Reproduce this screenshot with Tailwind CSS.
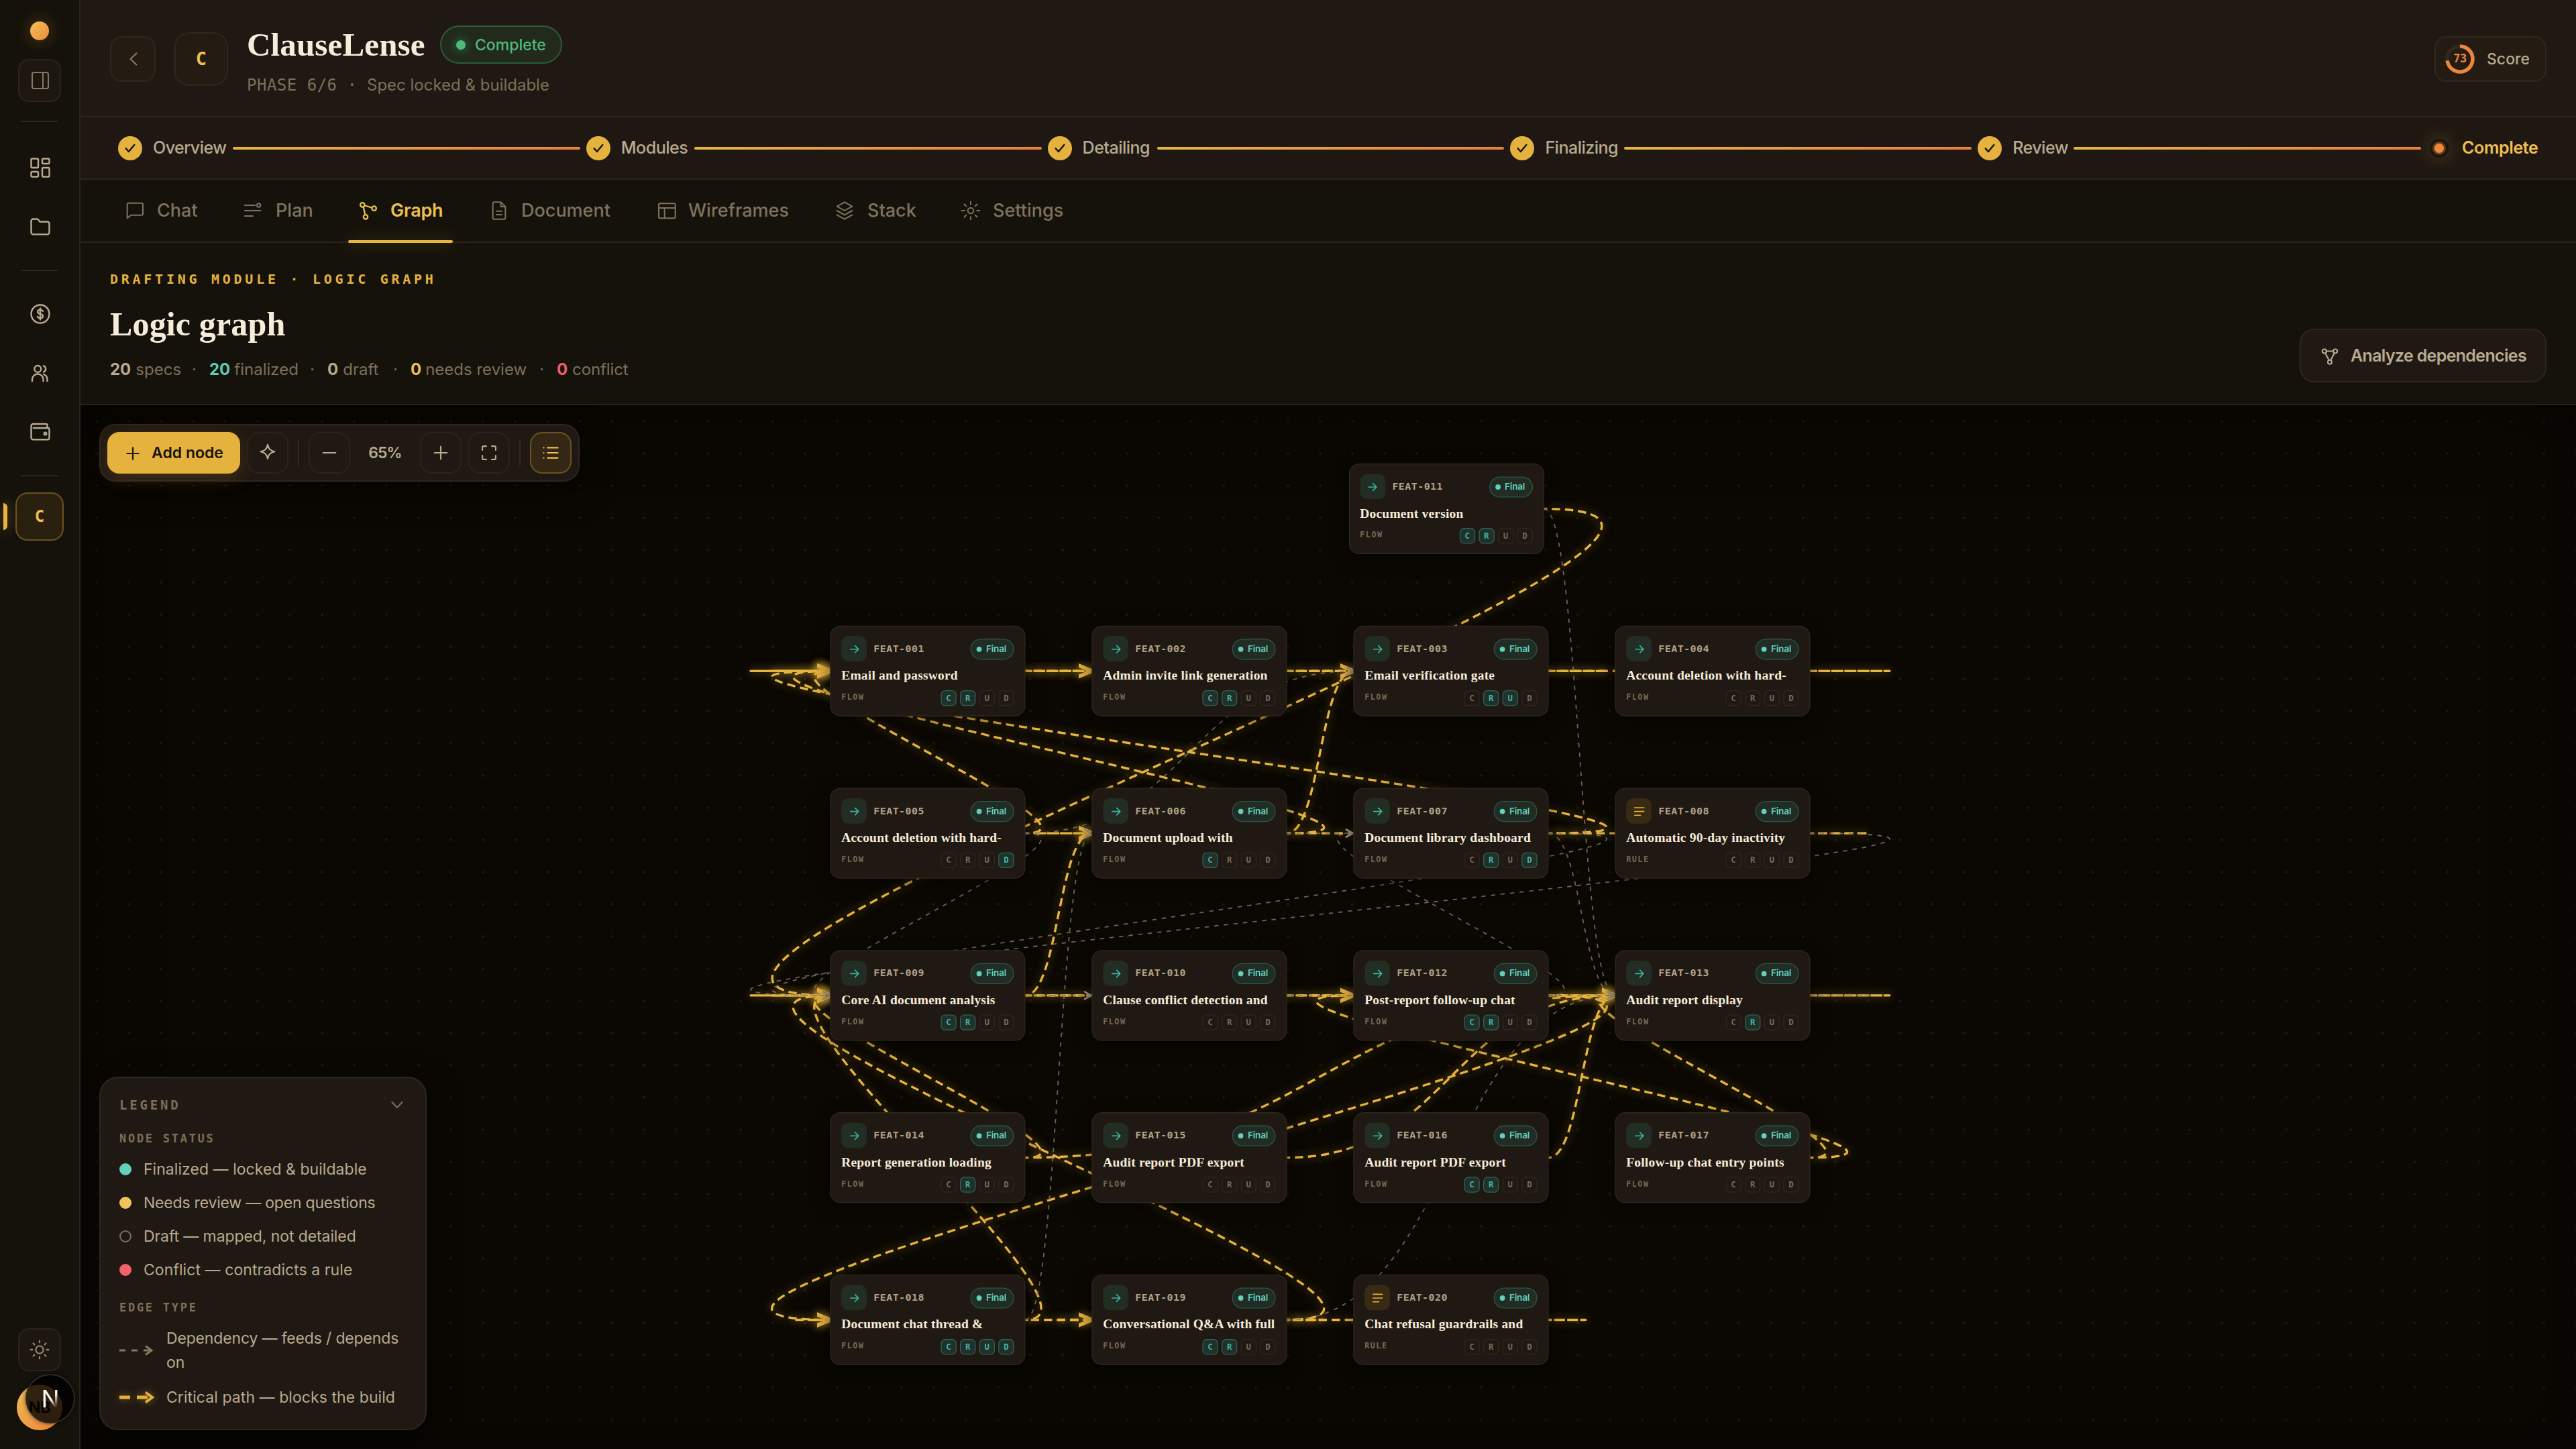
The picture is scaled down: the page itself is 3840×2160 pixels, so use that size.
<!DOCTYPE html>
<html lang="en">
<head>
  <meta charset="UTF-8" />
  <meta name="viewport" content="width=device-width, initial-scale=1" />
  <title>ClauseLense - Logic graph</title>
  <script src="https://cdn.jsdelivr.net/npm/@tailwindcss/browser@4"></script>
</head>
<body class="flex h-[2160px] w-[3840px] overflow-hidden bg-[#15120b] font-['Inter','Liberation_Sans',sans-serif] text-[#b8ab90]">

  <!-- Sidebar -->
  <aside class="relative flex h-full w-[120px] shrink-0 flex-col items-center border-r-2 border-[#28241c] bg-[#15120b] pt-8 pb-7">
    <div class="size-7 rounded-full bg-linear-to-br from-[#f2c155] to-[#ea8a3c] shadow-[0_0_24px_rgba(232,150,50,0.35)]"></div>
    <button class="mt-7 flex size-16 items-center justify-center rounded-2xl border-2 border-[#2b241b] bg-[#1e1711] text-[#857960]">
      <svg class="ml-0.5 size-8" viewBox="0 0 24 24" fill="none" stroke="currentColor" stroke-width="1.5"><rect x="3" y="3" width="18" height="18" rx="2"/><path d="M15 3v18"/></svg>
    </button>
    <div class="mt-7 h-0.5 w-14 bg-[#2d261b]"></div>
    <a class="mt-8 ml-0.5 flex size-[72px] items-center justify-center">
      <svg class="size-9" viewBox="0 0 24 24" fill="none" stroke="currentColor" stroke-width="1.6"><rect x="3" y="3" width="7" height="9" rx="1"/><rect x="14" y="3" width="7" height="5" rx="1"/><rect x="14" y="12" width="7" height="9" rx="1"/><rect x="3" y="16" width="7" height="5" rx="1"/></svg>
    </a>
    <a class="mt-4 ml-0.5 flex size-[72px] items-center justify-center">
      <svg class="size-9" viewBox="0 0 24 24" fill="none" stroke="currentColor" stroke-width="1.6" stroke-linejoin="round"><path d="M3 6.3a2 2 0 0 1 2-2h3.6a2 2 0 0 1 1.6.8l1.4 1.9H19a2 2 0 0 1 2 2v8.6a2 2 0 0 1-2 2H5a2 2 0 0 1-2-2z"/></svg>
    </a>
    <div class="mt-7 h-0.5 w-14 bg-[#2d261b]"></div>
    <a class="mt-7 ml-0.5 flex size-[72px] items-center justify-center">
      <svg class="size-9" viewBox="0 0 24 24" fill="none" stroke="currentColor" stroke-width="1.6" stroke-linecap="round"><circle cx="12" cy="12" r="9"/><path d="M14.6 9.3c-.4-.9-1.3-1.4-2.6-1.4-1.5 0-2.6.7-2.6 1.9 0 2.9 5.3 1.4 5.3 4.3 0 1.3-1.2 2-2.7 2-1.4 0-2.4-.6-2.7-1.5M12 6.3v11.4"/></svg>
    </a>
    <a class="mt-4 ml-0.5 flex size-[72px] items-center justify-center">
      <svg class="size-9" viewBox="0 0 24 24" fill="none" stroke="currentColor" stroke-width="1.6" stroke-linecap="round"><circle cx="9.5" cy="8" r="3.3"/><path d="M4 20v-1.5a5.5 5.5 0 0 1 11 0V20M15.3 4.9a3.3 3.3 0 0 1 0 6.2M15.5 13.4a5.5 5.5 0 0 1 3.5 5.1V20"/></svg>
    </a>
    <a class="mt-4 ml-0.5 flex size-[72px] items-center justify-center">
      <svg class="size-9" viewBox="0 0 24 24" fill="none" stroke="currentColor" stroke-width="1.6" stroke-linejoin="round"><path d="M19 8V5.5A1.5 1.5 0 0 0 17.5 4H5a2 2 0 0 0-2 2v11.5a2 2 0 0 0 2 2h14.5A1.5 1.5 0 0 0 21 18V9.5A1.5 1.5 0 0 0 19.5 8h-15"/><circle cx="17" cy="13.7" r="1.2"/></svg>
    </a>
    <div class="mt-7 h-0.5 w-14 bg-[#2d261b]"></div>
    <a class="relative mt-6 flex size-[72px] items-center justify-center rounded-[18px] border-2 border-[#6a511e] bg-[#292010] font-['DejaVu_Sans_Mono',monospace] text-[24px] font-bold text-[#f0c04f]">
      C
      <span class="absolute top-[14px] -left-5 h-10 w-1.5 rounded-r-full bg-[#e9b440] shadow-[0_0_20px_rgba(232,178,60,0.5)]"></span>
    </a>
    <button class="mt-auto flex size-16 shrink-0 items-center justify-center rounded-2xl border-2 border-[#2b241b] bg-[#1e1711] text-[#92866c]">
      <svg class="size-8" viewBox="0 0 24 24" fill="none" stroke="currentColor" stroke-width="1.7" stroke-linecap="round"><circle cx="12" cy="12" r="4.2"/><path d="M12 2v2M12 20v2M4.900 4.900l1.400 1.400M17.700 17.700l1.400 1.400M2 12h2M20 12h2M4.900 19.100l1.400-1.400M17.700 6.300l1.400-1.400"/></svg>
    </button>
    <div class="relative mt-5 flex size-[68px] shrink-0 items-center justify-center rounded-full bg-linear-to-br from-[#f2bd52] to-[#e8833a] text-[23px] font-bold text-[#15100a]">
      NB
      <div class="absolute -top-4 left-[13px] flex size-[74px] items-center justify-center rounded-full border-2 border-[#2c2a28] bg-black/80 shadow-[0_0_6px_rgba(0,0,0,0.6)]">
        <span class="bg-linear-to-br from-white from-55% to-white/10 to-80% bg-clip-text text-[36px] leading-none font-normal text-transparent">N</span>
      </div>
    </div>
  </aside>

  <main class="flex h-full min-w-0 flex-1 flex-col">

    <!-- Project header -->
    <header class="flex h-[175px] shrink-0 items-start border-b-2 border-[#2b251f] bg-[#201812] pr-11 pl-11">
      <button class="mt-[54px] flex size-[68px] items-center justify-center rounded-[18px] border-2 border-[#30271c] bg-[#241b13] text-[#857960]">
        <svg class="ml-0.5 size-8" viewBox="0 0 24 24" fill="none" stroke="currentColor" stroke-width="1.7" stroke-linecap="round" stroke-linejoin="round"><path d="M15.300 5.600L8.600 12l6.700 6.400"/></svg>
      </button>
      <div class="mt-12 ml-7 flex size-20 items-center justify-center rounded-[22px] border-2 border-[#30271c] bg-[#241b13] font-['DejaVu_Sans_Mono',monospace] text-[27px] font-bold text-[#f0c04f]">C</div>
      <div class="mt-[38px] ml-[28px]">
        <div class="flex h-[57px] items-center">
          <h1 class="w-[288px] font-['Liberation_Serif',serif] text-[49px] leading-none font-bold tracking-[0.003em] whitespace-nowrap text-[#f6ecda]">ClauseLense</h1>
          <span class="flex h-[57px] w-[182px] items-center rounded-full border-2 border-[#2b5a3c] bg-[#222a1c] pt-px pl-[22px] text-[23px] font-medium text-[#50b97c]">
            <i class="mr-[14px] size-[14px] rounded-full bg-[#4fba7d] shadow-[0_0_14px_rgba(79,186,125,0.6)]"></i>Complete
          </span>
        </div>
        <div class="mt-[16px] flex h-8 items-center text-2xl text-[#7c7059]">
          <span class="w-[179px] font-['DejaVu_Sans_Mono',monospace] tracking-[0.5px]">PHASE 6/6<span class="ml-[15px]">·</span></span>
          <span>Spec locked &amp; buildable</span>
        </div>
      </div>
      <button class="mt-[54px] ml-auto flex h-[68px] w-[167px] items-center rounded-[18px] border-2 border-[#30271c] bg-[#241b13] pl-[14px] text-[23px] font-medium text-[#b8ab90]">
        <span class="relative mr-[18px] flex size-[44px] items-center justify-center">
          <svg class="absolute inset-0 size-[44px] -rotate-90" viewBox="0 0 44 44" fill="none" stroke-width="5.5"><circle cx="22" cy="22" r="19" stroke="#30281e"/><circle cx="22" cy="22" r="19" stroke="#ea853a" pathLength="100" stroke-dasharray="73 100"/></svg>
          <span class="font-['DejaVu_Sans_Mono',monospace] text-[17px] font-bold tracking-[-0.03em] text-[#ea853a]">73</span>
        </span>Score
      </button>
    </header>

    <!-- Phase stepper -->
    <div id="stepper" class="flex h-[93px] shrink-0 items-center border-b-2 border-[#2b251f] bg-[#1f1812] pr-[47px] pl-14 text-[25px] font-medium"></div>

    <!-- Tabs -->
    <nav class="flex h-[94px] shrink-0 items-center border-b-2 border-[#28241b] pl-[65px] text-[27px] font-medium text-[#7f735c]">
      <a class="flex w-[176px] items-center gap-[17px]">
        <svg class="size-8" viewBox="0 0 24 24" fill="none" stroke="currentColor" stroke-width="1.5" stroke-linejoin="round"><path d="M21 15.500a1.500 1.500 0 0 1-1.500 1.500H7.500L3.500 20.500V5A1.500 1.500 0 0 1 5 3.500h14.500A1.500 1.500 0 0 1 21 5z"/></svg>Chat
      </a>
      <a class="flex w-[172px] items-center gap-[18px]">
        <svg class="size-8" viewBox="0 0 24 24" fill="none" stroke="currentColor" stroke-width="1.5" stroke-linecap="round"><path d="M3 6h11.500M3 12h17.500M3 18h9"/><circle cx="18.500" cy="6" r="2"/></svg>Plan
      </a>
      <a class="relative flex h-[92px] w-[195px] items-center gap-[17px] font-semibold tracking-[-0.01em] text-[#f0c04f]">
        <svg class="size-8" viewBox="0 0 24 24" fill="none" stroke="currentColor" stroke-width="1.7"><circle cx="5.500" cy="5.500" r="2.400"/><circle cx="18.500" cy="9.500" r="2.400"/><circle cx="9" cy="19" r="2.400"/><path d="M7.900 6.200l8.200 2.600M6.500 7.700l2 8.900"/></svg>Graph
        <span class="absolute -bottom-0.5 -left-[14px] h-1 w-[156px] rounded-full bg-[#e9b440] shadow-[0_0_24px_rgba(232,160,60,0.4)]"></span>
      </a>
      <a class="flex w-[250px] items-center gap-[17px]">
        <svg class="size-8" viewBox="0 0 24 24" fill="none" stroke="currentColor" stroke-width="1.5" stroke-linejoin="round"><path d="M14 2.500H6.500A1.500 1.500 0 0 0 5 4v16a1.500 1.500 0 0 0 1.500 1.500h11A1.500 1.500 0 0 0 19 20V7.500zM14 2.500v5h5M8.500 12.500h7M8.500 16.500h7"/></svg>Document
      </a>
      <a class="flex w-[265px] items-center gap-4">
        <svg class="size-8" viewBox="0 0 24 24" fill="none" stroke="currentColor" stroke-width="1.5"><rect x="3" y="4" width="18.500" height="16.500" rx="1.500"/><path d="M3 9h18.500M9.500 9v11.500"/></svg>Wireframes
      </a>
      <a class="flex w-[188px] items-center gap-[18px]">
        <svg class="size-8" viewBox="0 0 24 24" fill="none" stroke="currentColor" stroke-width="1.5" stroke-linejoin="round" stroke-linecap="round"><path d="M12 2.500l8.500 4.700L12 12 3.500 7.200zM3.500 12l8.500 4.700 8.500-4.700M3.500 16.700l8.500 4.700 8.500-4.700"/></svg>Stack
      </a>
      <a class="flex items-center gap-[17px]">
        <svg class="size-8" viewBox="0 0 24 24" fill="none" stroke="currentColor" stroke-width="1.5" stroke-linecap="round"><circle cx="12" cy="12" r="3.200"/><path d="M12 2v3M12 19v3M4.900 4.900l2.100 2.100M17 17l2.100 2.100M2 12h3M19 12h3M4.900 19.100L7 17M17 7l2.100-2.100"/></svg>Settings
      </a>
    </nav>

    <!-- Page head -->
    <section class="flex h-[242px] shrink-0 items-end justify-between border-b-2 border-[#28241b] px-11 pb-8">
      <div class="pb-px">
        <p class="h-6 font-['DejaVu_Sans_Mono',monospace] text-[20px] leading-5 font-bold tracking-[0.237em] text-[#e5b23e]">DRAFTING MODULE · LOGIC GRAPH</p>
        <h2 class="mt-[23px] font-['Liberation_Serif',serif] text-[50px] leading-[60px] font-bold tracking-[0.003em] text-[#f6ecda]">Logic graph</h2>
        <div class="mt-5 flex h-9 items-center text-[24px] text-[#7c7059]">
          <span class="flex w-[148px] justify-between"><span><b class="mr-[7px] font-bold text-[#b8ab90]">20</b>specs</span><i class="mr-[19px] not-italic">·</i></span>
          <span class="flex w-[176px] justify-between"><span><b class="mr-[6px] font-bold text-[#5ecdb8]">20</b>finalized</span><i class="mr-[19px] not-italic">·</i></span>
          <span class="flex w-[124px] justify-between"><span><b class="mr-[7px] font-bold text-[#b8ab90]">0</b>draft</span><i class="mr-[19px] not-italic">·</i></span>
          <span class="flex w-[218px] justify-between"><span><b class="mr-[6px] font-bold text-[#f0c04f]">0</b>needs review</span><i class="mr-[19px] not-italic">·</i></span>
          <span class="tracking-[-0.005em]"><b class="mr-[7px] font-bold text-[#f05f66]">0</b>conflict</span>
        </div>
      </div>
      <button class="flex h-20 w-[368px] items-center rounded-[22px] border-2 border-[#30271c] bg-[#201812] pt-0.5 pl-7 text-[25px] font-semibold tracking-[-0.027em] whitespace-nowrap text-[#b8ab90]">
        <svg class="mr-[16px] size-[30px]" viewBox="0 0 24 24" fill="none" stroke="currentColor" stroke-width="1.7"><circle cx="5.500" cy="6" r="2.400"/><circle cx="18.500" cy="6" r="2.400"/><circle cx="12" cy="19" r="2.400"/><path d="M7.900 6h8.200M6.500 8.200l4.500 8.600M17.500 8.200L13 16.800"/></svg>Analyze dependencies
      </button>
    </section>

    <!-- Graph canvas -->
    <section class="relative flex-1 overflow-hidden bg-[#0b0803]">
      <div class="absolute inset-0 bg-[radial-gradient(circle,#1b1711_1.5px,transparent_2.2px)] bg-size-[48px_48px]"></div>
      <div class="absolute inset-0 shadow-[inset_0_0_110px_rgba(0,0,0,0.5)]"></div>

      <div id="viewport" class="absolute top-0 left-0 origin-top-left translate-x-[1117.3px] translate-y-[328.7px] scale-[1.3]">
        <svg class="absolute top-0 left-0 size-px overflow-visible" fill="none">
          <defs>
            <marker id="critical" markerUnits="userSpaceOnUse" markerWidth="20" markerHeight="20" viewBox="-15 -10 20 20" refX="0" refY="0" orient="auto"><path d="M-20 -8.500L0.500 0L-20 8.500" fill="none" stroke="#e5b13d" stroke-width="4.300"/></marker>
            <marker id="dependency" markerUnits="userSpaceOnUse" markerWidth="14" markerHeight="14" viewBox="-10 -7 14 14" refX="0" refY="0" orient="auto"><path d="M-8 -4.200L-0.500 0L-8 4.200" fill="none" stroke="#a09580" stroke-width="1.900" stroke-linecap="round" stroke-linejoin="round"/></marker>
          </defs>
          <g id="edges"></g>
        </svg>
      </div>

      <!-- Toolbar -->
      <div class="absolute top-7 left-7 flex h-[86px] w-[716px] items-center gap-2.5 rounded-3xl border-2 border-[#2d261d] bg-[#201812] px-2.5 text-[#b8ab90] shadow-[0_16px_48px_rgba(0,0,0,0.5)]">
        <button class="flex h-[62px] w-[198px] shrink-0 items-center rounded-[18px] bg-[#e5b23e] pt-px pl-6 text-[23px] font-semibold whitespace-nowrap text-[#1a140a] shadow-[0_8px_28px_rgba(232,160,60,0.18)]">
          <svg class="mr-[14px] size-7" viewBox="0 0 24 24" fill="none" stroke="currentColor" stroke-width="1.800" stroke-linecap="round"><path d="M12 4.500v15M4.500 12h15"/></svg>Add node
        </button>
        <button class="flex size-[62px] shrink-0 items-center justify-center rounded-[18px] border-2 border-[#29241b]">
          <svg class="size-7" viewBox="0 0 24 24" fill="none" stroke="currentColor" stroke-width="1.900" stroke-linejoin="round"><path d="M12 1.500c1.100 5.500 3.400 7.900 9 9-5.600 1.100-7.900 3.500-9 9-1.100-5.500-3.400-7.900-9-9 5.600-1.100 7.900-3.500 9-9z"/></svg>
        </button>
        <span class="mx-1 h-10 w-0.5 bg-[#30281d]"></span>
        <button class="flex size-[62px] shrink-0 items-center justify-center rounded-[18px] border-2 border-[#29241b]">
          <svg class="size-7" viewBox="0 0 24 24" fill="none" stroke="currentColor" stroke-width="1.800" stroke-linecap="round"><path d="M4 12h16"/></svg>
        </button>
        <span class="w-[84px] text-center text-[23px] font-semibold tracking-[-0.04em]">65%</span>
        <button class="flex size-[62px] shrink-0 items-center justify-center rounded-[18px] border-2 border-[#29241b]">
          <svg class="size-7" viewBox="0 0 24 24" fill="none" stroke="currentColor" stroke-width="1.800" stroke-linecap="round"><path d="M12 4v16M4 12h16"/></svg>
        </button>
        <button class="flex size-[62px] shrink-0 items-center justify-center rounded-[18px] border-2 border-[#29241b]">
          <svg class="size-7" viewBox="0 0 24 24" fill="none" stroke="currentColor" stroke-width="1.800" stroke-linecap="round" stroke-linejoin="round"><path d="M3.500 8.500V5A1.500 1.500 0 0 1 5 3.500h3.500M15.500 3.500H19A1.500 1.500 0 0 1 20.500 5v3.500M20.500 15.500V19a1.500 1.500 0 0 1-1.500 1.500h-3.500M8.500 20.500H5A1.500 1.500 0 0 1 3.500 19v-3.500"/></svg>
        </button>
        <span class="mx-1 h-10 w-0.5 bg-[#30281d]"></span>
        <button class="flex size-[62px] shrink-0 items-center justify-center rounded-[18px] border-2 border-[#6a511e] bg-[#342715] text-[#f0c04f]">
          <svg class="size-7" viewBox="0 0 24 24" fill="none" stroke="currentColor" stroke-width="1.900" stroke-linecap="round"><path d="M8 5.500h13M8 12h13M8 18.500h13M3 5.500h.01M3 12h.01M3 18.500h.01"/></svg>
        </button>
      </div>

      <!-- Legend -->
      <div class="absolute bottom-7 left-7 flex h-[527px] w-[488px] flex-col rounded-[28px] border-2 border-[#2f271d] bg-[#201812] px-7 pt-[25px] text-[23px] leading-9 text-[#b8ab90] shadow-[0_16px_48px_rgba(0,0,0,0.5)]">
        <div class="flex h-[30px] items-center justify-between font-['DejaVu_Sans_Mono',monospace] text-[19px] font-bold tracking-[0.2em] text-[#7c7059]">LEGEND
          <svg class="size-7" viewBox="0 0 24 24" fill="none" stroke="currentColor" stroke-width="1.800" stroke-linecap="round" stroke-linejoin="round"><path d="M5.500 8.500l6.500 7 6.500-7"/></svg>
        </div>
        <p class="mt-6 h-6 font-['DejaVu_Sans_Mono',monospace] text-[17px] leading-[22px] font-bold tracking-[0.16em] text-[#7c7059]">NODE STATUS</p>
        <div class="mt-[15px] flex flex-col gap-[14px]">
          <div class="flex h-9 items-center gap-[18px]"><i class="size-[18px] rounded-full bg-[#62d0bb]"></i><span class="tracking-[0.002em]">Finalized — locked &amp; buildable</span></div>
          <div class="flex h-9 items-center gap-[18px]"><i class="size-[18px] rounded-full bg-[#f0c65c]"></i><span class="tracking-[-0.009em]">Needs review — open questions</span></div>
          <div class="flex h-9 items-center gap-[18px]"><i class="size-[18px] rounded-full border-2 border-[#7c7059]"></i><span class="tracking-[-0.004em]">Draft — mapped, not detailed</span></div>
          <div class="flex h-9 items-center gap-[18px]"><i class="size-[18px] rounded-full bg-[#f3626b]"></i><span class="tracking-[0.003em]">Conflict — contradicts a rule</span></div>
        </div>
        <p class="mt-[27px] h-6 font-['DejaVu_Sans_Mono',monospace] text-[17px] leading-[22px] font-bold tracking-[0.16em] text-[#7c7059]">EDGE TYPE</p>
        <div class="mt-[15px] flex h-[72px] items-center gap-[18px]">
          <svg class="h-6 w-[52px] shrink-0" viewBox="0 0 52 24" fill="none" stroke="#857960"><path d="M0 12h48" stroke-width="3" stroke-dasharray="9 9"/><path d="M39 5.500l9 6.500-9 6.500" stroke-width="3"/></svg>
          <span class="tracking-[-0.007em] whitespace-nowrap">Dependency — feeds / depends<br>on</span>
        </div>
        <div class="mt-4 flex h-9 items-center gap-[18px]">
          <svg class="h-6 w-[52px] shrink-0 overflow-visible drop-shadow-[0_0_6px_rgba(232,178,60,0.5)]" viewBox="0 0 52 24" fill="none" stroke="#e5b13d"><path d="M0 12h48" stroke-width="5" stroke-dasharray="16 10"/><path d="M39 4.500l10 7.500-10 7.500" stroke-width="4"/></svg>
          <span class="tracking-[0.003em] whitespace-nowrap">Critical path — blocks the build</span>
        </div>
      </div>
    </section>
  </main>

  <script>
    // Stepper: label, label width
    const phases = [['Overview', 110], ['Modules', 100], ['Detailing', 102], ['Finalizing', 109], ['Review', 82]];
    document.getElementById('stepper').innerHTML = phases.map(([label, width]) => `
      <span class="flex size-9 shrink-0 items-center justify-center rounded-full bg-[#e5b23e] text-[#1a140a]">
        <svg class="size-5" viewBox="0 0 24 24" fill="none" stroke="currentColor" stroke-width="3" stroke-linecap="round" stroke-linejoin="round"><path d="M4.500 12.500l5 5.500L19.500 6"/></svg>
      </span>
      <span class="ml-4 shrink-0 tracking-[-0.02em] whitespace-nowrap" style="width: ${width}px">${label}</span>
      <span class="mx-[9px] h-1 flex-1 rounded-full bg-linear-to-r from-[#e9b440] to-[#ea803c]"></span>`).join('') + `
      <span class="flex size-9 shrink-0 items-center justify-center rounded-full border-4 border-[#2a231a] bg-[#1c150e] shadow-[0_0_24px_rgba(232,150,50,0.18)]">
        <i class="size-[14px] rounded-full bg-[#ee883d] ring-[3px] ring-[#ee883d]/35"></i>
      </span>
      <span class="ml-4 w-[123px] shrink-0 font-semibold tracking-[-0.015em] whitespace-nowrap text-[#f0c04f]">Complete</span>`;

    // Nodes: id, x, y, title, active CRUD letters, kind
    const nodes = [
      ['011', 594.7, -186, 'Document version', 'CR', 'FLOW'],
      ['001', 0, 0, 'Email and password', 'CR', 'FLOW'],
      ['002', 300, 0, 'Admin invite link generation', 'CR', 'FLOW'],
      ['003', 600, 0, 'Email verification gate', 'RU', 'FLOW'],
      ['004', 900, 0, 'Account deletion with hard-', '', 'FLOW'],
      ['005', 0, 186, 'Account deletion with hard-', 'D', 'FLOW'],
      ['006', 300, 186, 'Document upload with', 'C', 'FLOW'],
      ['007', 600, 186, 'Document library dashboard', 'RD', 'FLOW'],
      ['008', 900, 186, 'Automatic 90-day inactivity', '', 'RULE'],
      ['009', 0, 372, 'Core AI document analysis', 'CR', 'FLOW'],
      ['010', 300, 372, 'Clause conflict detection and', '', 'FLOW'],
      ['012', 600, 372, 'Post-report follow-up chat', 'CR', 'FLOW'],
      ['013', 900, 372, 'Audit report display', 'R', 'FLOW'],
      ['014', 0, 558, 'Report generation loading', 'R', 'FLOW'],
      ['015', 300, 558, 'Audit report PDF export', '', 'FLOW'],
      ['016', 600, 558, 'Audit report PDF export', 'CR', 'FLOW'],
      ['017', 900, 558, 'Follow-up chat entry points', '', 'FLOW'],
      ['018', 0, 744, 'Document chat thread &amp;', 'CRUD', 'FLOW'],
      ['019', 300, 744, 'Conversational Q&amp;A with full', 'CR', 'FLOW'],
      ['020', 600, 744, 'Chat refusal guardrails and', '', 'RULE'],
    ];

    const critical = ['001>002', '003>001', '004>001', '005>001', '006>001', '007>001', '006>003', '008>006', '009>006',
      '011>009', '012>009', '013>009', '014>009', '018>009', '019>009', '014>013', '015>013', '016>013', '017>013',
      '017>012', '012>018', '019>018', '020>019'];
    const dependency = ['005>003', '005>009', '006>007', '018>006', '012>007', '007>009', '008>009', '007>013',
      '011>013', '013>010', '019>013'];

    const at = {};
    nodes.forEach(([id, x, y]) => at[id] = { x, y });

    function edgePath(edge) {
      const [from, to] = edge.split('>');
      const x1 = at[from].x + 224, y1 = at[from].y + 52;
      const x2 = at[to].x, y2 = at[to].y + 52;
      const c = Math.abs(x2 - x1) / 2;
      return `M${x1} ${y1}C${x1 + c} ${y1} ${x2 - c} ${y2} ${x2} ${y2}`;
    }

    document.getElementById('edges').innerHTML =
      critical.map(e => `<path d="${edgePath(e)}" class="drop-shadow-[0_0_5px_rgba(232,178,60,0.55)]" stroke="#e8b43f" stroke-width="2.6" stroke-dasharray="9.5 5.5" stroke-dashoffset="6" marker-end="url(#critical)"/>`).join('') +
      dependency.map(e => `<path d="${edgePath(e)}" stroke="#857b68" stroke-opacity="0.8" stroke-width="1.4" stroke-dasharray="5 6" marker-end="url(#dependency)"/>`).join('');

    const on = 'border-[#2b6453] bg-[#21302a] text-[#3fb5a0]';
    const off = 'border-[#2f271c] text-[#776b56]';
    const flowIcon = '<span class="flex size-[29px] items-center justify-center rounded-lg bg-[#222d24] text-[#3fb5a0]"><svg class="size-4" viewBox="0 0 24 24" fill="none" stroke="currentColor" stroke-width="1.9" stroke-linecap="round" stroke-linejoin="round"><path d="M5 12h14M13 6l6 6-6 6"/></svg></span>';
    const ruleIcon = '<span class="flex size-[29px] items-center justify-center rounded-lg bg-[#382b14] text-[#e5b13d]"><svg class="size-4" viewBox="0 0 24 24" fill="none" stroke="currentColor" stroke-width="1.9" stroke-linecap="round"><path d="M4 5.5h16M4 12h16M4 18.5h10"/></svg></span>';

    document.getElementById('viewport').insertAdjacentHTML('beforeend', nodes.map(([id, x, y, title, crud, kind]) => `
      <div class="absolute h-[104px] w-[224px] rounded-xl border border-[#30271c] bg-[#201812] px-3 pt-[11px] shadow-[0_5px_18px_rgba(0,0,0,0.5)]" style="left: ${x}px; top: ${y}px">
        <div class="flex h-[29px] items-center">
          ${kind === 'RULE' ? ruleIcon : flowIcon}
          <span class="ml-2 font-['DejaVu_Sans_Mono',monospace] text-[11.5px] font-bold tracking-[0.03em] text-[#b0a388]">FEAT-${id}</span>
          <span class="ml-auto flex h-6 w-[50px] items-center gap-[5px] rounded-full border border-[#28584a] bg-[#202c24] pl-1.5 text-[10.5px] font-semibold tracking-[-0.02em] text-[#62d0bb]"><i class="size-1.5 rounded-full bg-[#62d0bb]"></i>Final</span>
        </div>
        <h3 class="mt-[5.5px] h-5 font-['Liberation_Serif',serif] text-[15px] leading-5 font-bold tracking-[0.01em] whitespace-nowrap text-[#f6ecda]">${title}</h3>
        <div class="mt-[7.5px] flex h-[18px] items-center gap-1 font-['DejaVu_Sans_Mono',monospace] text-[9px] font-bold">
          <span class="mr-auto tracking-[0.13em] text-[#776b56]">${kind}</span>
          ${[...'CRUD'].map(l => `<span class="flex size-[18px] items-center justify-center rounded-[5px] border text-[9.5px] ${crud.includes(l) ? on : off}">${l}</span>`).join('')}
        </div>
      </div>`).join(''));
  </script>
</body>
</html>
